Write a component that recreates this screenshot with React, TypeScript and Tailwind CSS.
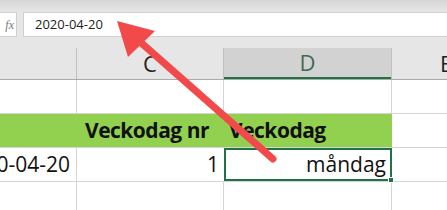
import React from 'react'

const cellFont = { fontFamily: '"Open Sans", "Liberation Sans", sans-serif' }

function Arrow() {
  return (
    <svg
      className="pointer-events-none absolute left-0 top-0"
      width={447}
      height={210}
      viewBox="0 0 447 210"
    >
      <line x1={273} y1={159} x2={130} y2={33} stroke="#f24a4a" strokeWidth={7} strokeLinecap="round" />
      <polygon points="117,21 155,31 128,57" fill="#f24a4a" />
    </svg>
  )
}

export default function App() {
  return (
    <div className="relative h-[210px] w-[447px] overflow-hidden bg-white">
      {/* title strip */}
      <div className="h-[12px] bg-gradient-to-b from-[#d6d6d6] to-[#e6e6e6]" />

      {/* formula bar */}
      <div className="flex h-[36px] bg-[#e6e6e6]">
        <div className="flex h-[25px] w-[17px] items-center justify-end overflow-hidden border border-l-0 border-[#d0d0d0] bg-white">
          <span className="mr-[2px] whitespace-nowrap text-[12px] italic text-[#777]" style={{ fontFamily: '"Liberation Serif", serif' }}>
            fx
          </span>
        </div>
        <div className="ml-[6px] flex h-[25px] flex-1 items-center border border-r-0 border-[#d0d0d0] bg-white pl-[11px]">
          <span className="text-[13px] text-[#222]" style={{ fontFamily: '"Open Sans", sans-serif' }}>
            2020-04-20
          </span>
        </div>
      </div>

      {/* column headers */}
      <div className="flex h-[32px] border-b border-[#ababab] bg-[#e6e6e6] text-[22px] text-[#222]" style={cellFont}>
        <div className="w-[77px] shrink-0 border-r border-[#c0c0c0]" />
        <div className="flex w-[147px] shrink-0 items-center justify-center border-r border-[#c0c0c0]">C</div>
        <div className="flex w-[167px] shrink-0 items-center justify-center border-b-2 border-b-[#217346] bg-[#d2d2d2] text-[#3d6b4f]">
          D
        </div>
        <div className="flex flex-1 items-center border-l border-[#c0c0c0] pl-[48px]">E</div>
      </div>

      {/* rows */}
      <div className="text-[21px] text-[#111]" style={cellFont}>
        <div className="flex h-[34px] border-b border-[#d4d4d4]">
          <div className="w-[77px] shrink-0 border-r border-[#d4d4d4]" />
          <div className="w-[147px] shrink-0 border-r border-[#d4d4d4]" />
          <div className="w-[168px] shrink-0 border-r border-[#d4d4d4]" />
          <div className="flex-1" />
        </div>
        <div className="flex h-[34px] items-center border-b border-[#d4d4d4] font-bold tracking-[-0.5px]">
          <div className="h-full w-[77px] shrink-0 bg-[#92d050]" />
          <div className="flex h-full w-[147px] shrink-0 items-center justify-end bg-[#92d050] pr-[15px]">Veckodag nr</div>
          <div className="flex h-full w-[168px] shrink-0 items-center whitespace-nowrap bg-[#92d050] pl-[5px]">Veckodag</div>
          <div className="h-full flex-1" />
        </div>
        <div className="flex h-[34px] border-b border-[#d4d4d4]">
          <div className="flex w-[77px] shrink-0 items-center justify-end overflow-hidden border-r border-[#d4d4d4] pr-[6px]">
            <span className="whitespace-nowrap">2020-04-20</span>
          </div>
          <div className="flex w-[147px] shrink-0 items-center justify-end pr-[5px]">1</div>
          <div className="relative flex w-[168px] shrink-0 items-center justify-end border-2 border-[#217346] pr-[4px]">
            måndag
            <div className="absolute -bottom-[4px] -right-[4px] h-[6px] w-[6px] border border-white bg-[#217346]" />
          </div>
          <div className="flex-1" />
        </div>
        <div className="flex h-[40px]">
          <div className="w-[77px] shrink-0 border-r border-[#d4d4d4]" />
          <div className="w-[147px] shrink-0 border-r border-[#d4d4d4]" />
          <div className="w-[168px] shrink-0 border-r border-[#d4d4d4]" />
          <div className="flex-1" />
        </div>
      </div>

      <Arrow />
    </div>
  )
}
